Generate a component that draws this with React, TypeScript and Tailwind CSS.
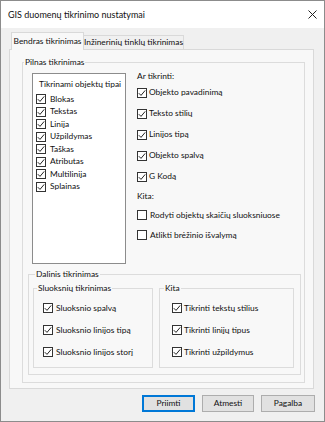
import React from 'react';

const Check: React.FC<{ checked?: boolean }> = ({ checked }) => (
  <span className="flex h-[10px] w-[10px] shrink-0 items-center justify-center border border-[#333333] bg-white">
    {checked && (
      <svg width="8" height="8" viewBox="0 0 8 8">
        <path d="M0.8 4.2 L3 6.4 L7.2 1.4" fill="none" stroke="#222222" strokeWidth="1" />
      </svg>
    )}
  </span>
);

const Row: React.FC<{ label: string; checked?: boolean; className?: string }> = ({ label, checked, className }) => (
  <div className={`flex items-center ${className ?? ''}`}>
    <Check checked={checked} />
    <span className="whitespace-nowrap">{label}</span>
  </div>
);

const objectTypes = ['Blokas', 'Tekstas', 'Linija', 'Užpildymas', 'Taškas', 'Atributas', 'Multilinija', 'Splainas'];

const App: React.FC = () => {
  return (
    <div
      className="h-[422px] w-[325px] whitespace-nowrap border border-[#8c8c8c] bg-[#f0f0f0] text-[8.4px] text-[#111111]"
      style={{ fontFamily: 'Lato, "Noto Sans", sans-serif' }}
    >
      {/* title bar */}
      <div className="flex h-[27px] items-center justify-between bg-white pl-[7px] pr-[7px]">
        <span className="text-[9px]">GIS duomenų tikrinimo nustatymai</span>
        <svg width="9" height="9" viewBox="0 0 9 9">
          <path d="M0.5 0.5 L8.5 8.5 M8.5 0.5 L0.5 8.5" stroke="#222222" strokeWidth="1" />
        </svg>
      </div>

      <div className="h-[393px] pl-[8px] pt-[4px]">
        {/* tabs */}
        <div className="flex h-[17px] items-end pl-[2px]">
          <div className="relative z-10 -mb-px flex h-[18px] w-[73px] items-center justify-center border border-b-0 border-[#d9d9d9] bg-[#f8f8f8]">
            Bendras tikrinimas
          </div>
          <div className="flex h-[14px] w-[100px] items-center justify-center border border-b-0 border-l-0 border-[#d9d9d9] bg-[#f0f0f0]">
            Inžinerinių tinklų tikrinimas
          </div>
        </div>

        {/* tab page */}
        <div className="h-[340px] w-[305px] border border-[#d9d9d9] bg-[#f8f8f8] pl-[12px] pr-[8px] pt-[6px]">
          <fieldset className="h-[327px] border border-[#dcdcdc] pb-[7px]">
            <legend className="ml-[1px] h-[12px] px-[1px] leading-[12px]">Pilnas tikrinimas</legend>
            <div className="flex">
              <div className="ml-[9px] mt-[5px] h-[191px] w-[94px] border border-[#8c8c8c] bg-white pl-[3px] pt-[4px]">
                <div className="h-[12px] pl-[3px] leading-[12px]">Tikrinami objektų tipai</div>
                <div className="mt-[3px] flex flex-col">
                  {objectTypes.map((t) => (
                    <Row key={t} label={t} checked className="h-[12.5px] gap-[4px]" />
                  ))}
                </div>
              </div>
              <div className="ml-[11px] mt-[2px] flex flex-col">
                <div className="h-[12px] leading-[12px]">Ar tikrinti:</div>
                <Row label="Objekto pavadinimą" checked className="h-[21px] gap-[2px]" />
                <Row label="Teksto stilių" checked className="h-[21px] gap-[2px]" />
                <Row label="Linijos tipą" checked className="h-[21px] gap-[2px]" />
                <Row label="Objekto spalvą" checked className="h-[21px] gap-[2px]" />
                <Row label="G Kodą" checked className="h-[21px] gap-[2px]" />
                <div className="flex h-[18px] items-center">Kita:</div>
                <Row label="Rodyti objektų skaičių sluoksniuose" className="h-[20px] gap-[3px]" />
                <Row label="Atlikti brėžinio išvalymą" className="h-[20px] gap-[3px]" />
              </div>
            </div>

            <fieldset className="ml-[5px] mt-[4px] w-[273px] border border-[#dcdcdc] pb-[6px] pl-[4px] pr-[6px]">
              <legend className="ml-[2px] h-[12px] px-[1px] leading-[12px]">Dalinis tikrinimas</legend>
              <div className="mt-[2px] flex gap-[6px]">
                <fieldset className="w-[120px] border border-[#dcdcdc] pb-[4px] pl-[9px] pt-[3px]">
                  <legend className="-ml-[6px] h-[12px] px-[1px] leading-[12px]">Sluoksnių tikrinimas</legend>
                  <Row label="Sluoksnio spalvą" checked className="h-[22px] gap-[3px]" />
                  <Row label="Sluoksnio linijos tipą" checked className="h-[22px] gap-[3px]" />
                  <Row label="Sluoksnio linijos storį" checked className="h-[22px] gap-[3px]" />
                </fieldset>
                <fieldset className="w-[135px] border border-[#dcdcdc] pb-[4px] pl-[12px] pt-[3px]">
                  <legend className="-ml-[8px] h-[12px] px-[1px] leading-[12px]">Kita</legend>
                  <Row label="Tikrinti tekstų stilius" checked className="h-[22px] gap-[2px]" />
                  <Row label="Tikrinti linijų tipus" checked className="h-[22px] gap-[2px]" />
                  <Row label="Tikrinti užpildymus" checked className="h-[22px] gap-[2px]" />
                </fieldset>
              </div>
            </fieldset>
          </fieldset>
        </div>

        {/* buttons */}
        <div className="mt-[6px] flex justify-end gap-[7px] pr-[9px]">
          <button className="h-[17px] w-[53px] border border-[#0078d7] bg-[#e1e1e1] shadow-[inset_0_0_0_1px_#0078d7]">Priimti</button>
          <button className="h-[17px] w-[52px] border border-[#adadad] bg-[#e1e1e1]">Atmesti</button>
          <button className="h-[17px] w-[54px] border border-[#adadad] bg-[#e1e1e1]">Pagalba</button>
        </div>
      </div>
    </div>
  );
};

export default App;
